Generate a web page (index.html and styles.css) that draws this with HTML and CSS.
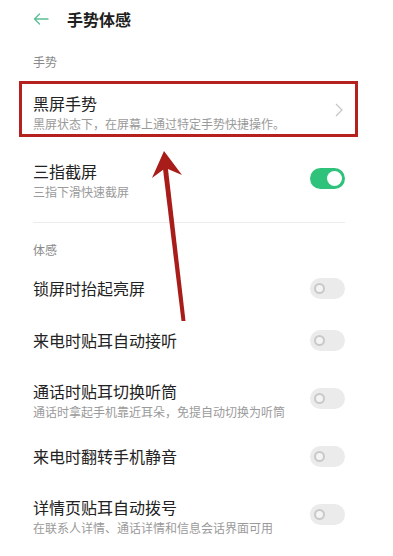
FILE: index.html
```html
<!DOCTYPE html>
<html lang="zh">
<head>
<meta charset="utf-8">
<link rel="stylesheet" href="styles.css">
</head>
<body>
<div class="page">
  <header class="header">
    <svg class="back" width="16" height="12" viewBox="0 0 16 12"><path d="M15 6H1.5M6.5 1L1.5 6l5 5" fill="none" stroke="#5cbf95" stroke-width="1.4" stroke-linecap="round" stroke-linejoin="round"/></svg>
    <h1 class="title">手势体感</h1>
  </header>

  <div class="section-label first">手势</div>
  <div class="row double highlight">
    <div class="text">
      <div class="main">黑屏手势</div>
      <div class="sub">黑屏状态下，在屏幕上通过特定手势快捷操作。</div>
    </div>
    <svg class="chev" width="8" height="14" viewBox="0 0 8 14"><path d="M1 1l6 6-6 6" fill="none" stroke="#c4c4c4" stroke-width="1.2"/></svg>
  </div>
  <div class="row double second">
    <div class="text">
      <div class="main">三指截屏</div>
      <div class="sub">三指下滑快速截屏</div>
    </div>
    <span class="toggle on"><span class="knob"></span></span>
  </div>
  <div class="divider"></div>

  <div class="section-label">体感</div>
  <div class="row single">
    <div class="text"><div class="main">锁屏时抬起亮屏</div></div>
    <span class="toggle"><span class="knob"></span></span>
  </div>
  <div class="row single">
    <div class="text"><div class="main">来电时贴耳自动接听</div></div>
    <span class="toggle"><span class="knob"></span></span>
  </div>
  <div class="row double">
    <div class="text">
      <div class="main">通话时贴耳切换听筒</div>
      <div class="sub">通话时拿起手机靠近耳朵，免提自动切换为听筒</div>
    </div>
    <span class="toggle"><span class="knob"></span></span>
  </div>
  <div class="row single">
    <div class="text"><div class="main">来电时翻转手机静音</div></div>
    <span class="toggle"><span class="knob"></span></span>
  </div>
  <div class="row double">
    <div class="text">
      <div class="main">详情页贴耳自动拨号</div>
      <div class="sub">在联系人详情、通话详情和信息会话界面可用</div>
    </div>
    <span class="toggle"><span class="knob"></span></span>
  </div>
</div>
<svg class="annot-arrow" width="393" height="556" viewBox="0 0 393 556">
  <polygon points="162.5,165 167.5,165 185.5,321 181.5,321" fill="#a81d1a"/>
  <polygon points="164,151 182,175 165.5,168 152,178" fill="#a81d1a"/>
</svg>
</body>
</html>
```

FILE: styles.css
```css
html, body {
  margin: 0;
  padding: 0;
  background: #ffffff;
}
body {
  width: 393px;
  height: 556px;
  overflow: hidden;
  position: relative;
  font-family: "Noto Sans CJK SC", "Noto Sans", sans-serif;
  color: #222;
}
.page {
  padding: 0 48px 0 33px;
  display: flex;
  flex-direction: column;
}
.header {
  height: 38px;
  display: flex;
  align-items: center;
}
.back {
  display: block;
  margin-right: 18px;
}
.title {
  margin: 0;
  font-size: 16px;
  font-weight: 700;
  color: #1e1e1e;
  line-height: 20px;
}
.section-label {
  height: 24px;
  line-height: 24px;
  font-size: 12px;
  color: #8a8a8a;
  margin-top: 15px;
}
.section-label.first {
  margin-top: 12px;
}
.row {
  display: flex;
  align-items: center;
  justify-content: space-between;
}
.row.single {
  height: 52px;
}
.row.double {
  height: 64px;
}
.row.double .text {
  padding-top: 4px;
}
.highlight {
  margin-top: 4px;
  position: relative;
}
.highlight::after {
  content: "";
  position: absolute;
  top: 3px;
  bottom: 5px;
  left: -14px;
  right: -13px;
  border: 3.5px solid #b5221e;
  pointer-events: none;
}
.second {
  margin-top: 4px;
}
.text {
  display: flex;
  flex-direction: column;
  gap: 3px;
}
.main {
  font-size: 16px;
  line-height: 20px;
  color: #222;
}
.sub {
  font-size: 12px;
  line-height: 16px;
  color: #9a9a9a;
}
.chev {
  display: block;
  margin-right: 2px;
}
.divider {
  height: 1px;
  background: #ececec;
  margin-top: 12px;
}
.toggle {
  width: 35px;
  height: 21px;
  border-radius: 11px;
  background: #ebebeb;
  display: flex;
  align-items: center;
  padding: 0 4px;
  box-sizing: border-box;
  flex-shrink: 0;
}
.toggle .knob {
  width: 11px;
  height: 11px;
  border-radius: 50%;
  box-sizing: border-box;
  border: 2.5px solid #c9c9c9;
  background: #f4f4f4;
}
.toggle.on {
  background: #2fc27a;
  justify-content: flex-end;
  padding: 0 3px;
}
.toggle.on .knob {
  width: 15px;
  height: 15px;
  border: none;
  background: #ffffff;
}
.annot-arrow {
  position: absolute;
  left: 0;
  top: 0;
  pointer-events: none;
}
```
